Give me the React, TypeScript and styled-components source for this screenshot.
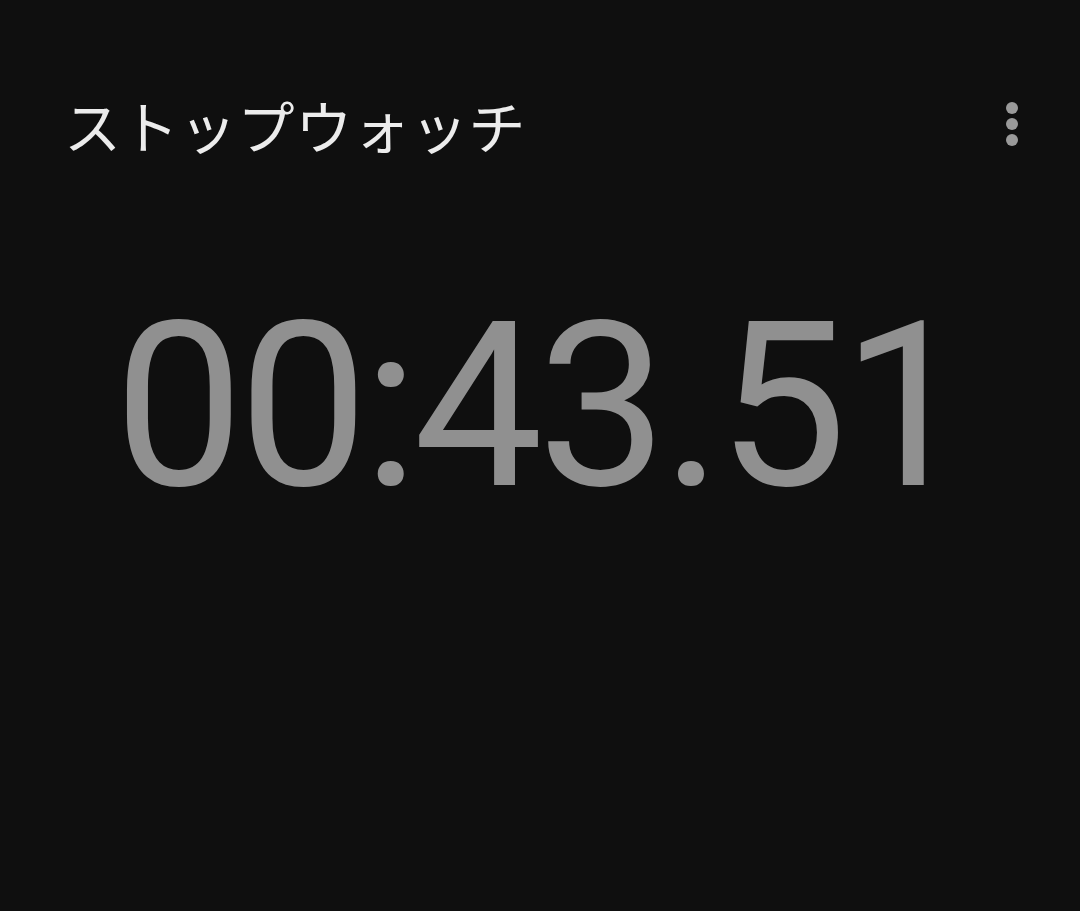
import styled, { createGlobalStyle } from "styled-components"

const Global = createGlobalStyle`
    html, body {
        margin: 0;
        padding: 0;
        background: #0f0f0f;
    }
`

const Screen = styled.div`
    width: 1080px;
    height: 911px;
    background: #0f0f0f;
    display: flex;
    flex-direction: column;
    overflow: hidden;
`

const Header = styled.div`
    display: flex;
    justify-content: space-between;
    align-items: center;
    padding: 84px 56px 0 64px;
    height: 80px;
`

const Title = styled.h1`
    margin: 0;
    font-family: "Noto Sans CJK JP", "Noto Sans", sans-serif;
    font-weight: 400;
    font-size: 57px;
    color: #ececec;
    letter-spacing: 0.8px;
`

const MoreButton = styled.button`
    width: 24px;
    height: 48px;
    background: none;
    border: none;
    padding: 0;
    display: flex;
    flex-direction: column;
    align-items: center;
    justify-content: center;
    gap: 4px;
    cursor: pointer;
    span {
        width: 12px;
        height: 12px;
        border-radius: 50%;
        background: #9a9a9a;
    }
`

const TimeDisplay = styled.div`
    display: flex;
    justify-content: center;
    padding-top: 127px;
    font-family: Roboto, "Liberation Sans", sans-serif;
    font-size: 231px;
    line-height: 1;
    color: #909090;
    letter-spacing: -5.5px;
`

const App = () => {
    return (
        <>
            <Global />
            <Screen>
                <Header>
                    <Title>ストップウォッチ</Title>
                    <MoreButton aria-label="more">
                        <span />
                        <span />
                        <span />
                    </MoreButton>
                </Header>
                <TimeDisplay>00:43.51</TimeDisplay>
            </Screen>
        </>
    )
}

export default App
